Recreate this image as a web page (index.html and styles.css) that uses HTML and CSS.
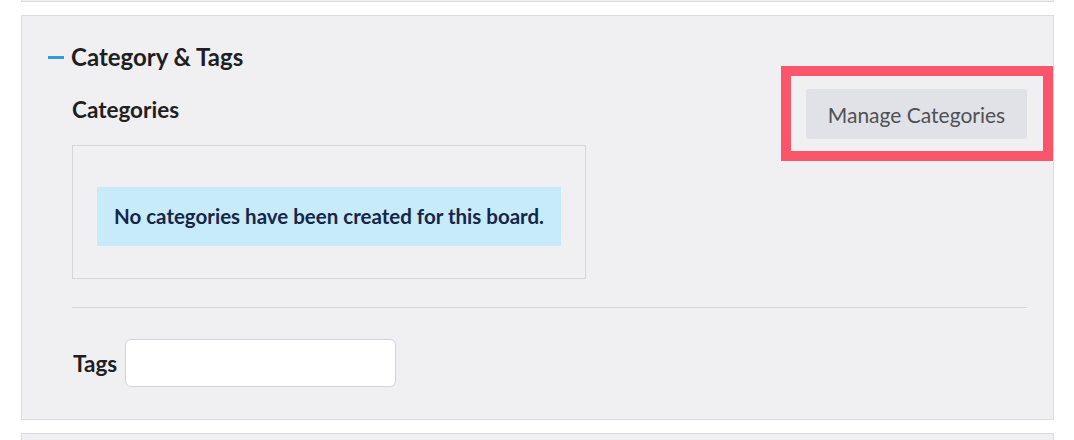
FILE: index.html
```html
<!DOCTYPE html>
<html lang="en">
<head>
<meta charset="utf-8">
<title>Category &amp; Tags</title>
<link rel="stylesheet" href="styles.css">
</head>
<body>
<div class="page">
  <div class="panel panel-prev"></div>
  <section class="panel panel-main">
    <h2 class="heading"><span class="collapse-icon" aria-hidden="true"></span>Category &amp; Tags</h2>
    <div class="body">
      <div class="cat-row">
        <div class="cat-col">
          <h3 class="label">Categories</h3>
          <div class="cat-box">
            <div class="alert">No categories have been created for this board.</div>
          </div>
        </div>
        <div class="btn-wrap">
          <button class="btn" type="button">Manage Categories</button>
          <span class="highlight" aria-hidden="true"></span>
        </div>
      </div>
      <hr class="divider">
      <div class="tags-row">
        <label class="label tags-label" for="tags">Tags</label>
        <input class="tags-input" id="tags" type="text">
      </div>
    </div>
  </section>
  <div class="panel panel-next"></div>
</div>
</body>
</html>
```
FILE: styles.css
```css
html, body {
  margin: 0;
  padding: 0;
  background: #ffffff;
}
body {
  font-family: Lato, "Open Sans", "Liberation Sans", sans-serif;
  color: #1f1f23;
}
.page {
  padding-left: 21px;
  width: 1033px;
}
.panel {
  box-sizing: border-box;
  width: 1033px;
  background: #f0f0f2;
  border: 1px solid #dcdcdf;
}
.panel-prev {
  height: 2px;
  border-top: none;
}
.panel-main {
  margin-top: 13px;
  padding: 27px 26px 32px 26px;
}
.panel-next {
  margin-top: 13px;
  height: 20px;
  border-bottom: none;
}
.heading {
  margin: 0;
  height: 28px;
  line-height: 28px;
  font-size: 24px;
  font-weight: 700;
  display: flex;
  align-items: center;
  color: #1f1f23;
}
.collapse-icon {
  display: inline-block;
  width: 16px;
  height: 3px;
  background: #2b9fd8;
  margin-right: 7px;
  margin-top: 1px;
}
.body {
  padding-left: 24px;
  margin-top: 18px;
}
.cat-row {
  display: flex;
  justify-content: space-between;
  align-items: flex-start;
}
.cat-col {
  padding-top: 7px;
}
.label {
  margin: 0;
  font-size: 22.5px;
  line-height: 28px;
  font-weight: 700;
  color: #1f1f23;
}
.cat-box {
  box-sizing: border-box;
  margin-top: 21px;
  width: 514px;
  height: 134px;
  border: 1px solid #d6d6d9;
  padding: 41px 24px 0 24px;
}
.alert {
  height: 59px;
  background: #c8ebf9;
  color: #15264a;
  font-size: 20.5px;
  font-weight: 700;
  line-height: 59px;
  padding: 0 16px 0 17px;
  white-space: nowrap;
}
.btn-wrap {
  position: relative;
}
.btn {
  display: block;
  width: 221px;
  height: 50px;
  border: none;
  border-radius: 3px;
  background: #e1e2e7;
  color: #505055;
  font-family: Lato, "Open Sans", "Liberation Sans", sans-serif;
  font-size: 21px;
  font-weight: 400;
  padding: 0;
}
.highlight {
  position: absolute;
  top: -23px;
  left: -25px;
  right: -26px;
  bottom: -22px;
  border: 10px solid #f9566b;
  pointer-events: none;
}
.divider {
  margin: 28px 0 0 0;
  border: none;
  height: 1px;
  background: #d6d6d9;
}
.tags-row {
  display: flex;
  align-items: center;
  margin-top: 31px;
  gap: 8px;
}
.tags-label {
  padding-left: 1px;
  padding-top: 1px;
}
.tags-input {
  box-sizing: border-box;
  width: 271px;
  height: 48px;
  border: 1px solid #d3d3d6;
  border-radius: 6px;
  background: #ffffff;
  margin: 0;
  padding: 0 10px;
  font-family: inherit;
  font-size: 18px;
}
```
